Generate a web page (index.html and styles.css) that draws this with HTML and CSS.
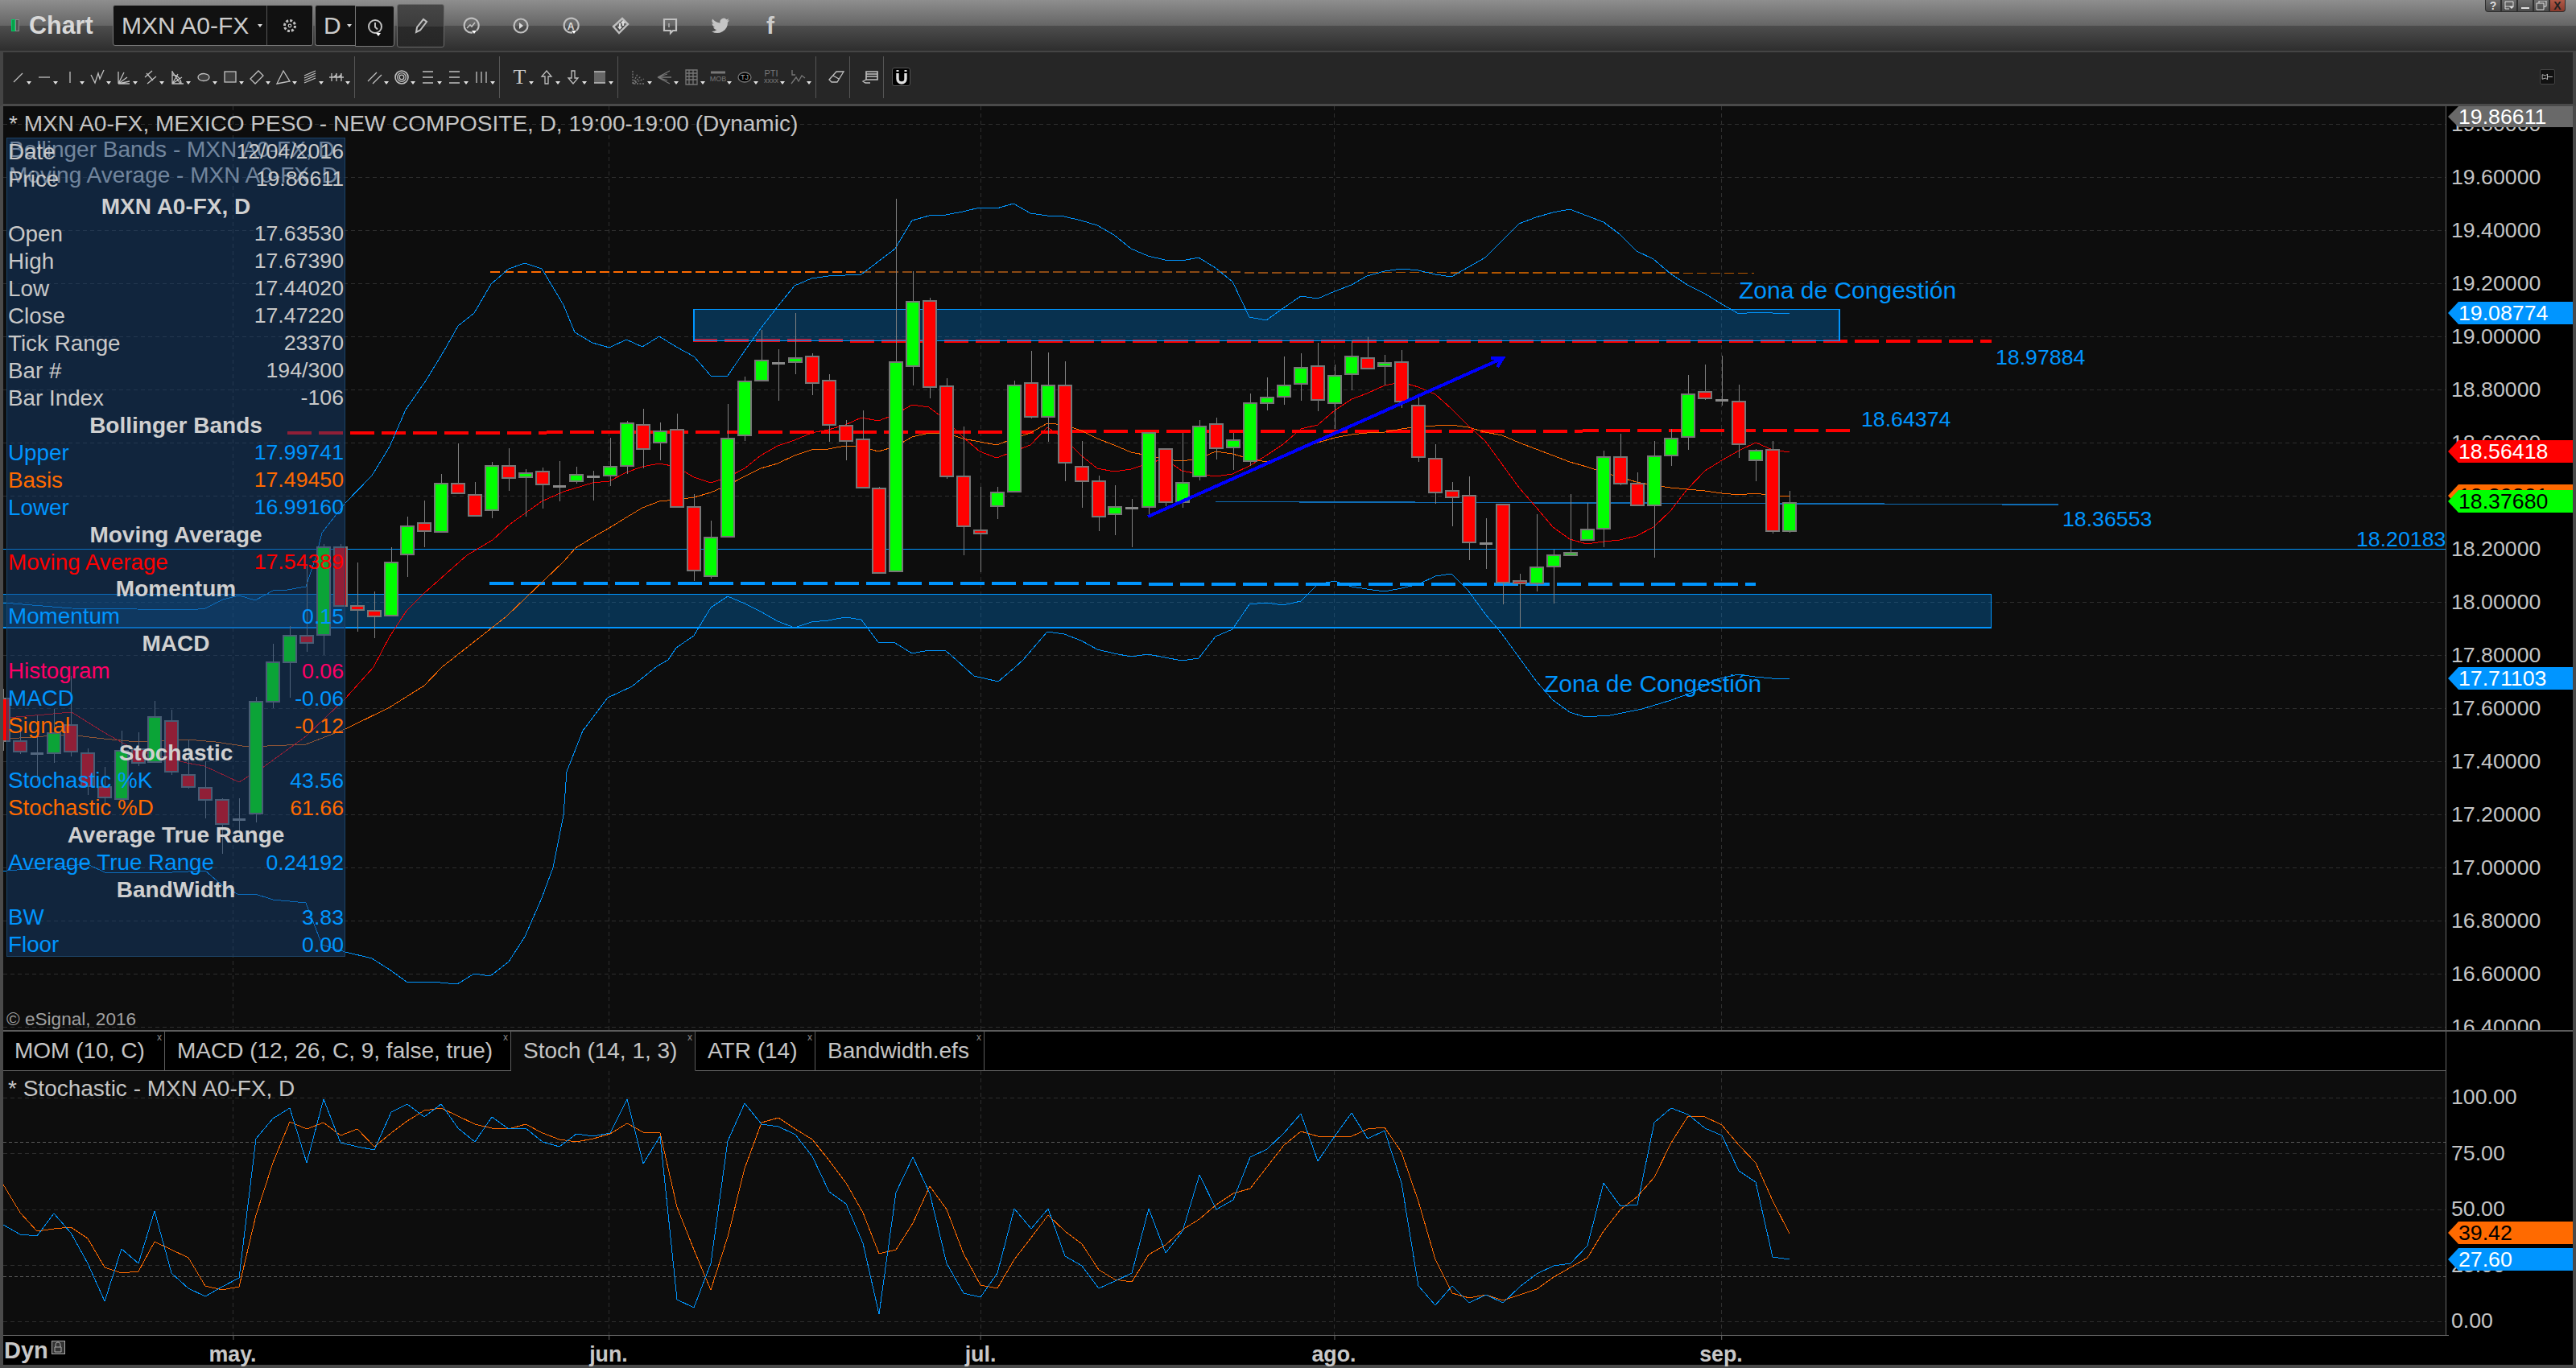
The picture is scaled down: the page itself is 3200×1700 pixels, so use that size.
FILE: index.html
```html
<!DOCTYPE html>
<html lang="es">
<head>
<meta charset="utf-8">
<title>Chart - MXN A0-FX</title>
<link rel="stylesheet" href="styles.css">
</head>
<body>
<div class="window">
  <header class="titlebar">
    <span class="led led-on"></span><span class="led"></span>
    <span class="app-name">Chart</span>
    <div class="symbol-box">
      <span class="symbol">MXN A0-FX</span><span class="mini-caret"></span>
      <span class="gear-cell"><svg class="ic" viewBox="0 0 24 24"><circle cx="12" cy="12" r="6.5" stroke-width="3" stroke-dasharray="3 2"/><circle cx="12" cy="12" r="1.8"/></svg></span>
    </div>
    <div class="interval-box"><span class="interval">D</span><span class="mini-caret"></span></div>
    <div class="clock-box"><svg class="ic" viewBox="0 0 24 24"><circle cx="12" cy="12" r="8" stroke-width="2"/><path d="M12 7v5.5l3 3" stroke-width="2"/></svg><span class="cap-caret"></span></div>
    <div class="pencil-box"><svg class="ic" viewBox="0 0 24 24"><path d="M6 20l1-6L15 4l4 3-8 10.5z" stroke-width="2"/></svg></div>
    <div class="title-icons">
      <span class="t-icon"><svg class="ic" viewBox="0 0 24 24"><path d="M19 18a9 9 0 1 0-5 2.5" stroke-width="2.2"/><path d="M7 15l4-4 2 2 4-5" stroke-width="1.6"/></svg><span class="cap-caret"></span></span>
      <span class="t-icon"><svg class="ic" viewBox="0 0 24 24"><circle cx="12" cy="12" r="8.5" stroke-width="2.2"/><path class="solid" d="M10 8l5 4-5 4z"/></svg></span>
      <span class="t-icon"><svg class="ic" viewBox="0 0 24 24"><path d="M19 18a9 9 0 1 0-5 2.5" stroke-width="2.2"/><text class="ic-a" x="12" y="16.5">A</text></svg><span class="cap-caret"></span></span>
      <span class="t-icon"><svg class="ic" viewBox="0 0 24 24"><path d="M3 13L14 3l7 7-11 11z" stroke-width="2.4"/><path class="solid" d="M8 13l3 4 3-4h-2V9h-2v4zM15 5l-3 4h2v3h2V9h2z"/></svg></span>
      <span class="t-icon"><svg class="ic" viewBox="0 0 24 24"><path d="M4 4h15v14h-4l-3 3v-3H4z" stroke-width="2.2"/><path d="M10 9v5"/></svg></span>
      <span class="t-icon"><svg class="ic ic-solid" viewBox="0 0 24 24"><path d="M23 4.9c-.8.4-1.7.6-2.6.7.9-.6 1.6-1.4 2-2.5-.9.5-1.9.9-2.9 1.1A4.6 4.6 0 0 0 11.6 8.4 13 13 0 0 1 2.2 3.6a4.6 4.6 0 0 0 1.4 6.1c-.7 0-1.4-.2-2.1-.6 0 2.2 1.6 4.1 3.7 4.6-.7.2-1.4.2-2.1.1.6 1.8 2.3 3.2 4.3 3.2A9.2 9.2 0 0 1 1 18.9 13 13 0 0 0 21 7.4c.9-.6 1.6-1.4 2-2.5z"/></svg></span>
      <span class="t-icon t-f">f</span>
    </div>
    <div class="win-buttons">
      <span class="win-btn">?</span>
      <span class="win-btn"><svg class="wb" viewBox="0 0 14 12"><path d="M2 1h10v6H2zM2 7v3h5" /><path class="solid" d="M7 7h6l-3 3z"/></svg></span>
      <span class="win-btn"><svg class="wb" viewBox="0 0 14 12"><path d="M2 9h10" stroke-width="2"/></svg></span>
      <span class="win-btn"><svg class="wb" viewBox="0 0 14 12"><path d="M4 3V0h9v7h-3M1 3h9v8H1z"/></svg></span>
      <span class="win-btn win-close">X</span>
    </div>
  </header>

  <nav class="toolbar">
    <span class="tool c"><svg class="ic" viewBox="0 0 24 24"><path d="M7 18L18 7"/></svg></span>
    <span class="tool c"><svg class="ic" viewBox="0 0 24 24"><path d="M5 12h14"/></svg></span>
    <span class="tool c"><svg class="ic" viewBox="0 0 24 24"><path d="M11 5v14"/></svg></span>
    <span class="tool c"><svg class="ic" viewBox="0 0 24 24"><path d="M4 9l5 10 4-12 2 7 5-11"/></svg></span>
    <span class="tool c"><svg class="ic" viewBox="0 0 24 24"><path d="M5 20V5M5 20l7-14M5 20l11-8M5 20l14-3M5 20h14"/></svg></span>
    <span class="tool c"><svg class="ic" viewBox="0 0 24 24"><path d="M5 12l9-8M8 20l11-9M7 7l8 9"/></svg></span>
    <span class="tool c"><svg class="ic" viewBox="0 0 24 24"><path d="M6 4v16h14M6 20l7-12M6 20l12-8M6 9a11 11 0 0 1 11 11M6 5l10 15"/></svg></span>
    <span class="tool c"><svg class="ic ic-g" viewBox="0 0 24 24"><ellipse cx="12" cy="12" rx="7" ry="4.5"/></svg></span>
    <span class="tool c"><svg class="ic ic-g" viewBox="0 0 24 24"><rect x="5" y="5" width="14" height="13"/></svg></span>
    <span class="tool c"><svg class="ic" viewBox="0 0 24 24"><path d="M4 14L14 4l6 6-10 10z"/></svg></span>
    <span class="tool c"><svg class="ic" viewBox="0 0 24 24"><path d="M4 20L12 4l8 13z"/></svg></span>
    <span class="tool c"><svg class="ic" viewBox="0 0 24 24"><path d="M5 10l14-6M5 13l14-6M5 16l14-6M5 19l14-6"/></svg></span>
    <span class="tool c"><svg class="ic" viewBox="0 0 24 24"><path d="M3 12h18M6 7v10M12 7v10M18 7v10M6 12c3 0 6-2 6-5M12 12c3 0 6-2 6-5"/></svg></span>
    <span class="sep"></span>
    <span class="tool c"><svg class="ic" viewBox="0 0 24 24"><path d="M3 17L14 6M9 20L20 9"/></svg></span>
    <span class="tool c"><svg class="ic" viewBox="0 0 24 24"><circle cx="12" cy="12" r="8" stroke-width="1.6"/><circle cx="12" cy="12" r="5.3"/><circle cx="12" cy="12" r="2.8"/></svg></span>
    <span class="tool c"><svg class="ic" viewBox="0 0 24 24"><path d="M5 5h13M5 12h13M5 19h13"/></svg></span>
    <span class="tool c"><svg class="ic" viewBox="0 0 24 24"><path d="M5 5h13M5 12h13M5 19h13"/></svg></span>
    <span class="tool c"><svg class="ic" viewBox="0 0 24 24"><path d="M6 5v14M12 5v14M18 5v14"/></svg></span>
    <span class="sep"></span>
    <span class="tool c tool-t">T</span>
    <span class="tool c"><svg class="ic" viewBox="0 0 24 24"><path d="M12 4l6 7h-4v9h-4v-9H6z"/></svg></span>
    <span class="tool c"><svg class="ic" viewBox="0 0 24 24"><path d="M12 20l-6-7h4V4h4v9h4z"/></svg></span>
    <span class="tool c"><svg class="ic ic-band" viewBox="0 0 24 24"><path d="M5 5h14v14H5z" stroke="none"/><path d="M5 5h14M5 19h14"/></svg></span>
    <span class="sep"></span>
    <span class="tool c"><svg class="ic ic-d" viewBox="0 0 24 24"><path d="M5 4v16h15M5 20l6-12M5 20l10-9M5 20l14-6" stroke-dasharray="2 1.5"/></svg></span>
    <span class="tool c"><svg class="ic ic-d" viewBox="0 0 24 24"><path d="M3 12l15-8M3 12h17M3 12l15 8M3 12l12-4M3 12l12 4"/></svg></span>
    <span class="tool c"><svg class="ic ic-d" viewBox="0 0 24 24"><path d="M5 3h14v18H5zM5 7h14M5 11h14M5 15h14M9 3v18M14 3v18"/></svg></span>
    <span class="tool c"><svg class="ic ic-d" viewBox="0 0 24 24"><path d="M3 6h18" stroke-width="3"/><text class="ic-small" x="12" y="17">MOB</text></svg></span>
    <span class="tool c"><svg class="ic ic-d" viewBox="0 0 24 24"><ellipse class="ic-black" cx="12" cy="12" rx="8" ry="6"/><text class="ic-small ic-light" x="12" y="15">TJ</text></svg></span>
    <span class="tool c"><svg class="ic ic-d" viewBox="0 0 24 24"><text class="ic-pti" x="12" y="11">PTI</text><text class="ic-small" x="12" y="19">xxxx</text></svg></span>
    <span class="tool c"><svg class="ic ic-d" viewBox="0 0 24 24"><path d="M5 3v6h4M4 20l6-8 3 5 4-7 4 3"/></svg></span>
    <span class="sep"></span>
    <span class="tool"><svg class="ic" viewBox="0 0 24 24"><path d="M3 15L12 5h9l-8 13H6zM8 10l7 4"/></svg></span>
    <span class="sep sep-tight"></span>
    <span class="tool"><svg class="ic" viewBox="0 0 24 24"><path d="M7 5h14v10H7zM7 8h14M7 11h14" stroke-width="1.6"/><path d="M7 15l-4 2 3 2h6"/></svg></span>
    <span class="sep sep-tight"></span>
    <span class="magnet"><svg class="ic ic-mag" viewBox="0 0 24 24"><path d="M7 3v2M17 3v2" stroke-width="3"/><path d="M7 7v7a5 5 0 0 0 10 0V7" stroke-width="3.4"/></svg></span>
    <span class="pin"><svg class="ic" viewBox="0 0 24 24"><path d="M3 8l6 2 3-3v10l-3-3-6 2zM12 12h9"/></svg></span>
  </nav>

  <div class="panes">
    <section class="pane-main">
      <div class="plot">
        <svg id="main-chart" class="chart" viewBox="4 132 3034 1148" width="3034" height="1148">
          <g id="main-grid"></g>
          <path class="dash-red" d="M861 423.4L2474 424.4"/>
          <path class="dash-red" d="M357 538L2299 535"/>
          <path class="dash-blue" d="M608 725L2181 726"/>
          <path class="dash-orange" d="M609 338L1070 338"/>
          <path class="dash-orange dash-orange-dim" d="M1070 338.2L1700 338.6"/>
          <path class="dash-orange dash-orange-mid" d="M1700 338.6L2179 339.4"/>
          <path class="rule-blue" d="M4 682H3038"/>
          <path class="rule-blue rule-blue-2" d="M1510 623.4L2557 627"/>
          <rect class="zone" x="862" y="384.5" width="1423" height="39"/>
          <rect class="zone" x="2" y="738.5" width="2471.5" height="41.5"/>
          <g id="studies"></g>
          <g id="candles"></g>
          <path class="arrow" d="M1426 642L1867 445M1852 445h15l-7 11"/>
          <text class="note" x="2160" y="371">Zona de Congestión</text>
          <text class="note" x="1918" y="860">Zona de Congestión</text>
          <text class="note note-num" x="2479" y="453">18.97884</text>
          <text class="note note-num" x="2312" y="530">18.64374</text>
          <text class="note note-num" x="2562" y="654">18.36553</text>
          <text class="note note-num" x="2927" y="679">18.20183</text>
        </svg>
        <div class="legend">
          <div class="legend-line">* MXN A0-FX, MEXICO PESO - NEW COMPOSITE, D, 19:00-19:00 (Dynamic)</div>
          <div class="legend-line">Bollinger Bands - MXN A0-FX, D</div>
          <div class="legend-line">Moving Average - MXN A0-FX, D</div>
        </div>
        <div class="copyright">© eSignal, 2016</div>
        <div class="data-panel">
          <div class="row"><span>Date</span><span>12/04/2016</span></div>
          <div class="row"><span>Price</span><span>19.86611</span></div>
          <div class="row head">MXN A0-FX, D</div>
          <div class="row"><span>Open</span><span>17.63530</span></div>
          <div class="row"><span>High</span><span>17.67390</span></div>
          <div class="row"><span>Low</span><span>17.44020</span></div>
          <div class="row"><span>Close</span><span>17.47220</span></div>
          <div class="row"><span>Tick Range</span><span>23370</span></div>
          <div class="row"><span>Bar #</span><span>194/300</span></div>
          <div class="row"><span>Bar Index</span><span>-106</span></div>
          <div class="row head">Bollinger Bands</div>
          <div class="row blue"><span>Upper</span><span>17.99741</span></div>
          <div class="row orange"><span>Basis</span><span>17.49450</span></div>
          <div class="row blue"><span>Lower</span><span>16.99160</span></div>
          <div class="row head">Moving Average</div>
          <div class="row red"><span>Moving Average</span><span>17.54389</span></div>
          <div class="row head">Momentum</div>
          <div class="row blue"><span>Momentum</span><span>0.15</span></div>
          <div class="row head">MACD</div>
          <div class="row pink"><span>Histogram</span><span>0.06</span></div>
          <div class="row blue"><span>MACD</span><span>-0.06</span></div>
          <div class="row orange"><span>Signal</span><span>-0.12</span></div>
          <div class="row head">Stochastic</div>
          <div class="row blue"><span>Stochastic %K</span><span>43.56</span></div>
          <div class="row orange"><span>Stochastic %D</span><span>61.66</span></div>
          <div class="row head">Average True Range</div>
          <div class="row blue"><span>Average True Range</span><span>0.24192</span></div>
          <div class="row head">BandWidth</div>
          <div class="row blue"><span>BW</span><span>3.83</span></div>
          <div class="row blue"><span>Floor</span><span>0.00</span></div>
        </div>
      </div>
      <div class="axis axis-main">
        <div class="scale scale-main">
          <span>19.80000</span><span>19.60000</span><span>19.40000</span><span>19.20000</span><span>19.00000</span><span>18.80000</span><span>18.60000</span><span>18.40000</span><span>18.20000</span><span>18.00000</span><span>17.80000</span><span>17.60000</span><span>17.40000</span><span>17.20000</span><span>17.00000</span><span>16.80000</span><span>16.60000</span><span>16.40000</span>
        </div>
        <span class="tag tag-price">19.86611</span>
        <span class="tag tag-upper">19.08774</span>
        <span class="tag tag-ma">18.56418</span>
        <span class="tag tag-basis">18.39801</span>
        <span class="tag tag-last">18.37680</span>
        <span class="tag tag-lower">17.71103</span>
      </div>
    </section>

    <section class="pane-lower">
      <div class="lower-left">
        <div class="tabs">
          <span class="tab tab-mom">MOM (10, C)<i class="tab-x">x</i></span>
          <span class="tab tab-macd">MACD (12, 26, C, 9, false, true)<i class="tab-x">x</i></span>
          <span class="tab tab-stoch">Stoch (14, 1, 3)<i class="tab-x">x</i></span>
          <span class="tab tab-atr">ATR (14)<i class="tab-x">x</i></span>
          <span class="tab tab-band">Bandwidth.efs<i class="tab-x">x</i></span>
        </div>
        <div class="plot plot-stoch">
          <svg id="stoch-chart" class="chart" viewBox="4 1331 3034 328" width="3034" height="328">
            <g id="stoch-grid"></g>
            <g id="stoch-lines"></g>
          </svg>
          <div class="stoch-legend">* Stochastic - MXN A0-FX, D</div>
        </div>
      </div>
      <div class="axis axis-stoch">
        <div class="scale scale-stoch">
          <span>100.00</span><span>75.00</span><span>50.00</span><span>25.00</span><span>0.00</span>
        </div>
        <span class="tag tag-d">39.42</span>
        <span class="tag tag-k">27.60</span>
      </div>
    </section>

    <footer class="time-axis">
      <span class="dyn">Dyn</span>
      <span class="lock"><svg viewBox="0 0 17 17"><rect x="0.5" y="0.5" width="16" height="16"/><path d="M5 8V5a3 3 0 0 1 6 0v3M4 8h8v6H4z"/></svg></span>
      <span class="month m-may">may.</span>
      <span class="month m-jun">jun.</span>
      <span class="month m-jul">jul.</span>
      <span class="month m-ago">ago.</span>
      <span class="month m-sep">sep.</span>
    </footer>
  </div>
</div>
<script src="chart.js"></script>
</body>
</html>
```

FILE: styles.css
```css
* { box-sizing: border-box; }
html, body { margin: 0; padding: 0; background: #000; }
body { font-family: "Liberation Sans", Arial, sans-serif; font-size: 26.7px; color: #c4c4c4; }

.window { width: 3200px; height: 1700px; display: flex; flex-direction: column; overflow: hidden; background: #000; }

/* title bar */
.titlebar { height: 63px; flex: none; display: flex; align-items: center; padding-left: 14px;
  background: linear-gradient(#8e8e8e 0, #656565 32px, #4d4d4d 32px, #2f2f2f 62px); position: relative; }
.led { width: 5px; height: 15px; background: #555; border: 1px solid #888; margin-right: 0; }
.led-on { background: #0aa04a; border-color: #0c6; }
.app-name { font-weight: bold; font-size: 30.5px; color: #d8d8d8; margin-left: 12px; width: 104px; }
.symbol-box { width: 249px; height: 51px; display: flex; align-items: center; background: #111; border: 1px solid #777; border-radius: 3px; padding-left: 10px; }
.symbol { font-size: 30px; width: 169px; color: #ccc; }
.mini-caret { width: 0; height: 0; border: 3px solid transparent; border-top: 4px solid #ddd; border-bottom: 0; }
.gear-cell { flex: 1; height: 100%; margin-left: 5px; border-left: 1px solid #555; display: flex; align-items: center; justify-content: center; }
.interval-box { width: 50px; height: 51px; margin-left: 2px; display: flex; align-items: center; gap: 7px; padding-left: 10px; background: #111; border: 1px solid #777; border-right: 0; border-radius: 3px 0 0 3px; }
.interval { font-size: 30px; color: #ccc; }
.clock-box { width: 49px; height: 51px; margin-top: 2px; position: relative; display: flex; align-items: center; justify-content: center; background: #111; border: 1px solid #777; border-radius: 0 3px 3px 0; }
.pencil-box { width: 59px; height: 54px; margin-left: 3px; display: flex; align-items: center; justify-content: center; background: linear-gradient(#464646 0, #3c3c3c 27px, #2a2a2a 27px, #262626 100%); border: 1px solid #6a6a6a; border-radius: 3px; }
.title-icons { display: flex; margin-left: 2px; }
.t-icon { width: 62px; height: 30px; position: relative; display: flex; align-items: center; justify-content: center; }
.t-f { font-weight: bold; font-size: 30px; color: #ccc; }
.cap-caret { position: absolute; left: 50%; top: 72%; margin-left: 1px; width: 0; height: 0; border: 3px solid transparent; border-top: 4px solid #fff; border-bottom: 0; }
.clock-box .cap-caret { top: 68%; }

.win-buttons { margin-left: auto; margin-right: 13px; align-self: flex-start; display: flex; }
.win-btn { width: 20px; height: 15px; display: flex; align-items: center; justify-content: center; background: linear-gradient(#6c6c6c, #4a4a4a); border: 1px solid #2e2e2e; border-top: 0; color: #ddd; font-size: 14px; font-weight: bold; }
.win-btn:first-child { border-radius: 0 0 0 4px; }
.win-close { background: linear-gradient(#b05a48, #8a3a2c); color: #222; border-radius: 0 0 4px 0; }
.wb { width: 14px; height: 12px; fill: none; stroke: #ddd; stroke-width: 1; }
.wb .solid { fill: #ddd; stroke: none; }

/* icons */
.ic { width: 24px; height: 24px; flex: none; fill: none; stroke: #c0c0c0; stroke-width: 1.3; }
.ic .solid { fill: #ddd; stroke: none; }
.ic-solid { fill: #c4c4c4; stroke: none; }
.ic-g { fill: #3e3e3e; }
.ic-band path:first-child { fill: #666; }
.ic-d { stroke: #777; }
.ic-a { font-size: 12px; text-anchor: middle; fill: #ddd; stroke: none; font-weight: bold; }
.ic-small { font-size: 9px; text-anchor: middle; fill: #777; stroke: none; }
.ic-light { fill: #aaa; }
.ic-pti { font-size: 11px; text-anchor: middle; fill: #777; stroke: none; }
.ic-black { fill: #000; }
.ic-mag { stroke: #ddd; }

/* drawing toolbar */
.toolbar { height: 69px; flex: none; display: flex; align-items: center; padding: 0 0 3px 1px; background: #262626; border-top: 2px solid #444; border-left: 4px solid #444; border-right: 4px solid #444; border-bottom: 3px solid #4a4a4a; }
.tool { width: 33px; height: 24px; position: relative; display: flex; align-items: center; justify-content: center; }
.tool.c::after { content: ""; position: absolute; left: 28px; top: 17px; width: 0; height: 0; border: 3.5px solid transparent; border-top: 4px solid #e0e0e0; border-bottom: 0; }
.tool-t { font-family: "Liberation Serif", serif; font-size: 26px; color: #ccc; }
.sep { width: 1px; height: 52px; background: #555; margin: 0 8px 0 6px; }
.sep-tight { margin-left: 0; }
.magnet { width: 23px; height: 23px; margin-left: 2px; display: flex; align-items: center; justify-content: center; background: #000; border: 1px solid #555; border-radius: 3px; }
.pin { width: 19px; height: 19px; margin-left: auto; margin-right: 22px; display: flex; align-items: center; justify-content: center; background: #111; border: 1px solid #444; border-radius: 2px; }
.pin .ic { width: 17px; height: 17px; }

/* panes */
.panes { flex: 1; display: flex; flex-direction: column; min-height: 0; border-left: 4px solid #4a4a4a; border-right: 4px solid #4a4a4a; border-bottom: 4px solid #4a4a4a; }
.pane-main { height: 1150px; flex: none; display: flex; border-bottom: 2px solid #5c5c5c; }
.plot { position: relative; width: 3034px; height: 100%; background: #0d0d0d; overflow: hidden; }
.chart { display: block; shape-rendering: crispEdges; }

.axis { flex: 1; position: relative; background: #000; border-left: 1px solid #666; overflow: hidden; }
.scale { display: flex; flex-direction: column; color: #c4c4c4; padding-left: 6px; }
.scale-main { margin-top: -11px; }
.scale-main span { height: 66px; line-height: 66px; flex: none; }
.scale-stoch { margin-top: 47.25px; }
.scale-stoch span { height: 69.5px; line-height: 69.5px; flex: none; }

.tag { position: absolute; left: 2px; right: 0; height: 28px; line-height: 28px; padding-left: 13px; clip-path: polygon(0 50%, 13px 0, 100% 0, 100% 100%, 13px 100%); color: #fff; }
.tag-price { top: 0; height: 26px; line-height: 26px; background: #696969; }
.tag-upper { top: 243px; background: #0095ff; }
.tag-ma { top: 415px; background: #ff0000; }
.tag-basis { top: 470px; background: #ff6a00; color: #000; }
.tag-last { top: 477px; background: #00ff00; color: #000; }
.tag-lower { top: 697px; background: #0095ff; }
.tag-d { top: 236px; background: #ff6a00; color: #000; }
.tag-k { top: 269px; background: #0095ff; }

/* chart overlays */
.dash-red, .dash-blue, .dash-orange, .rule-blue, .arrow { fill: none; }
.dash-red { stroke: #ff0000; stroke-width: 4; stroke-dasharray: 30 9; }
.dash-blue { stroke: #0095ff; stroke-width: 4; stroke-dasharray: 30 9; }
.dash-orange { stroke: #ff6a00; stroke-width: 1.5; stroke-dasharray: 12 5; }
.dash-orange-dim { stroke: #8c4a14; stroke-width: 2; }
.dash-orange-mid { stroke: #b05500; }
.rule-blue { stroke: #0095ff; stroke-width: 1; }
.rule-blue-2 { stroke: #0f6cb4; stroke-width: 1.5; }
.zone { fill: rgba(0, 125, 215, 0.33); stroke: #0095ff; stroke-width: 1.5; }
.arrow { stroke: #0000ff; stroke-width: 4; }
.note { font-size: 30px; fill: #0095ff; }
.note-num { font-size: 26.7px; }

.grid-h, .grid-v { fill: none; stroke: #2e2e2e; stroke-width: 1; stroke-dasharray: 5 4; }
.grid-strong { stroke: #5a5a5a; stroke-dasharray: 4 3; }
.line-blue, .line-red, .line-orange { fill: none; stroke-width: 1; }
.line-blue { stroke: #0095ff; }
.line-red { stroke: #ff0000; }
.line-orange { stroke: #ff6a00; }
.wick { stroke: #808080; stroke-width: 1; }
.body-g { fill: #00ff00; stroke: #777; stroke-width: 1.5; }
.body-r { fill: #ff0000; stroke: #777; stroke-width: 1.5; }
.body-d { fill: #8a8a8a; }

.legend { position: absolute; left: 7px; top: 6px; font-size: 28px; }
.legend-line { height: 32px; line-height: 32px; white-space: nowrap; color: #c4c4c4; }
.copyright { position: absolute; left: 4px; bottom: 0; font-size: 22.6px; line-height: 26px; color: #a0a0a0; }

.data-panel { position: absolute; left: 4px; top: 39px; width: 421px; height: 1018px; overflow: hidden; display: flex; flex-direction: column; background: rgba(24, 64, 116, 0.48); border: 1px solid #1d4468; }
.row { flex: none; height: 33.97px; display: flex; align-items: center; justify-content: space-between; padding: 0 1px; white-space: nowrap; color: #c8c8c8; font-size: 27.8px; }
.row span:last-child { font-size: 26.7px; }
.row.head { justify-content: center; font-weight: bold; font-size: 28px; color: #d0d0d0; }
.blue { color: #0095ff; }
.orange { color: #ff6a00; }
.red { color: #ff0000; }
.pink { color: #ff0066; }

/* lower pane */
.pane-lower { height: 377px; flex: none; display: flex; }
.lower-left { width: 3034px; display: flex; flex-direction: column; }
.tabs { height: 49px; flex: none; display: flex; background: #000; border-bottom: 1px solid #666; }
.tab { position: relative; height: 49px; line-height: 47px; font-size: 28px; white-space: nowrap; color: #c4c4c4; border-right: 1px solid #5c5c5c; border-bottom: 1px solid #666; flex: none; }
.tab-mom { width: 201px; padding-left: 14px; }
.tab-macd { width: 430px; padding-left: 15px; }
.tab-stoch { width: 229px; padding-left: 15px; background: #0d0d0d; border-bottom-color: #0d0d0d; }
.tab-atr { width: 149px; padding-left: 15px; }
.tab-band { width: 210px; padding-left: 15px; }
.tab-x { position: absolute; right: 3px; top: 0; font-style: normal; font-size: 12px; line-height: 14px; color: #888; }
.plot-stoch { width: auto; flex: 1; height: auto; }
.stoch-legend { position: absolute; left: 6px; top: 6px; line-height: 32px; font-size: 28px; color: #c4c4c4; }
.axis-stoch { flex: 1; }

/* time axis */
.time-axis { flex: 1; position: relative; background: #000; border-top: 1px solid #666; display: flex; align-items: center; margin-right: 154px; overflow: visible; }
.dyn { font-weight: bold; font-size: 29px; color: #c8c8c8; margin-left: 1px; }
.lock { width: 17px; height: 17px; margin-left: 4px; margin-top: -8px; }
.lock svg { display: block; width: 17px; height: 17px; fill: #333; stroke: #aaa; stroke-width: 1; }
.month { position: absolute; top: 8px; transform: translateX(-50%); font-weight: bold; font-size: 26.8px; color: #c8c8c8; }
.month::before { content: ""; position: absolute; left: 50%; top: -8px; width: 1px; height: 5px; background: #666; }
.m-may { left: 285px; }
.m-jun { left: 752px; }
.m-jul { left: 1214px; }
.m-ago { left: 1653px; }
.m-sep { left: 2134px; }
```

FILE: chart.js
```js
(function () {
  var NS = 'http://www.w3.org/2000/svg';
  function el(parent, name, cls, attrs) {
    var n = document.createElementNS(NS, name);
    if (cls) n.setAttribute('class', cls);
    for (var a in attrs) n.setAttribute(a, attrs[a]);
    parent.appendChild(n);
    return n;
  }
  function X(k) { return Math.round(2222.7 - 20.93 * k); }
  function pairs(a) { var s = []; for (var i = 0; i < a.length; i += 2) s.push(a[i] + ',' + a[i + 1]); return s.join(' '); }

  var VX = [289, 756, 1218, 1657, 2138];

  /* main grid */
  var mg = document.getElementById('main-grid');
  for (var i = 0; i < 18; i++) el(mg, 'path', 'grid-h', { d: 'M4 ' + (154 + 66 * i) + 'H3038' });
  VX.forEach(function (x) { el(mg, 'path', 'grid-v', { d: 'M' + x + ' 132V1280' }); });

  /* studies */
  var upper = [4,749,89,756,170,757,237,758,255,756,277,745,297,740,317,746,339,734,357,733,380,729,393,690,400,662,429,625,462,591,484,555,504,509,529,473,551,437,569,405,589,389,610,353,632,334,652,327,673,334,687,357,700,379,714,413,736,426,757,432,778,422,798,431,819,418,840,431,862,443,883,467,904,467,925,436,945,408,966,381,987,355,1008,346,1029,343,1050,342,1070,341,1091,325,1112,309,1133,274,1154,268,1175,267,1196,263,1217,258,1238,259,1259,253,1280,265,1301,268,1322,269,1343,274,1363,280,1384,292,1405,309,1426,318,1447,323,1468,324,1489,320,1510,333,1531,350,1552,394,1573,398,1594,383,1616,368,1637,371,1658,362,1679,354,1698,343,1720,337,1741,334,1762,336,1783,341,1803,344,1824,332,1845,320,1866,299,1887,278,1908,270,1929,264,1950,260,1971,268,1992,276,2012,291,2033,312,2054,322,2075,340,2096,354,2118,365,2139,378,2160,390,2181,388,2202,389,2223,390];
  var lower = [4,1082,9,1082,109,1074,130,1084,214,1084,255,1082,277,1101,297,1112,317,1111,339,1118,380,1122,400,1174,429,1183,462,1191,484,1205,505,1220,536,1220,568,1223,589,1210,609,1213,632,1195,652,1164,673,1116,687,1078,700,1013,704,959,724,908,755,867,785,853,816,828,830,820,840,805,862,790,883,755,904,741,925,750,945,760,966,772,987,780,1008,773,1029,771,1050,767,1070,770,1091,798,1112,799,1133,812,1154,808,1175,809,1188,820,1210,840,1240,847,1260,830,1271,820,1301,785,1322,788,1343,796,1363,807,1384,812,1405,816,1426,813,1447,817,1468,821,1489,818,1510,791,1531,782,1552,751,1573,749,1594,752,1616,747,1637,726,1658,722,1679,729,1698,732,1720,735,1741,731,1762,726,1783,716,1803,713,1824,734,1845,763,1866,788,1887,817,1908,846,1929,870,1950,885,1969,891,2000,889,2040,881,2076,870,2101,861,2133,844,2159,838,2180,841,2201,843,2223,843];
  var ma = [4,893,9,892,89,885,129,910,170,933,232,948,254,952,297,972,326,954,380,915,429,868,464,829,484,791,505,759,527,737,580,690,612,671,634,651,673,623,700,611,736,600,757,598,778,587,798,580,819,576,840,580,862,593,883,600,904,593,925,582,945,566,966,554,987,547,1008,538,1029,534,1050,528,1070,519,1091,523,1112,515,1133,503,1154,506,1175,522,1196,543,1217,561,1238,569,1259,561,1280,553,1301,531,1322,545,1343,566,1363,582,1384,586,1405,583,1426,576,1447,570,1468,585,1489,589,1510,592,1531,589,1552,579,1573,566,1594,552,1616,533,1637,528,1658,510,1679,496,1698,489,1720,479,1741,475,1762,481,1783,490,1803,508,1824,529,1845,548,1866,577,1887,606,1908,630,1929,655,1950,670,1971,676,1992,673,2012,671,2033,666,2054,655,2075,635,2096,608,2118,585,2139,572,2160,560,2181,550,2202,559,2223,562];
  var basis = [4,919,9,918,85,913,129,918,170,922,232,919,268,922,308,928,380,925,429,906,484,879,527,852,549,829,629,766,700,698,715,681,736,668,757,656,778,643,798,631,819,623,840,621,862,618,883,612,904,603,925,592,945,582,966,576,987,566,1008,559,1029,558,1050,554,1070,555,1091,561,1112,555,1133,543,1154,538,1175,538,1196,545,1217,549,1238,553,1259,545,1280,538,1301,526,1322,528,1343,535,1363,545,1384,553,1405,562,1426,566,1447,571,1468,573,1489,570,1510,561,1531,564,1552,570,1573,574,1594,568,1616,556,1637,550,1658,544,1679,540,1698,538,1720,537,1741,533,1762,530,1783,529,1803,528,1824,531,1845,537,1866,541,1887,550,1908,558,1929,566,1950,574,1971,580,1992,587,2012,593,2033,599,2054,603,2075,606,2096,608,2118,610,2139,613,2160,615,2181,613,2202,616,2223,617];
  var st = document.getElementById('studies');
  el(st, 'polyline', 'line-blue', { points: pairs(upper) });
  el(st, 'polyline', 'line-blue', { points: pairs(lower) });
  el(st, 'polyline', 'line-orange', { points: pairs(basis) });
  el(st, 'polyline', 'line-red', { points: pairs(ma) });

  /* candles, oldest first: type, wick top, body top, body bottom, wick bottom */
  var bars = [
    'r',856,868,921,933,'r',905,921,934,937,'d',889,936,936,971,'g',881,911,936,948,'r',840,901,934,940,
    'r',930,936,977,988,'r',953,978,991,1000,'g',908,933,993,993,'r',910,931,948,952,'g',871,891,947,947,
    'r',882,896,959,963,'r',919,963,978,980,'r',946,979,994,1017,'r',992,994,1024,1061,'d',992,1018,1018,1034,
    'g',866,872,1011,1022,'g',800,823,872,880,'g',778,790,823,867,'r',703,790,799,810,'g',676,680,789,814,
    'r',676,680,753,753,'r',699,753,758,785,'r',735,759,766,793,'g',680,699,765,765,'g',642,654,689,717,
    'r',622,650,660,680,'g',589,601,661,661,'r',551,601,613,613,'r',599,615,641,641,'g',574,579,634,644,
    'r',557,579,594,610,'g',583,588,593,642,'r',581,586,602,632,'d',573,604,604,623,'g',580,590,598,601,
    'd',585,592,592,622,'g',544,580,591,604,'g',523,526,579,589,'r',508,528,558,582,'g',525,536,550,572,
    'r',514,534,630,630,'r',614,630,709,722,'g',647,668,716,719,'g',502,545,667,668,'g',468,474,541,548,
    'g',410,448,473,474,'d',434,451,451,498,'g',389,445,450,465,'r',439,443,476,491,'r',465,473,528,549,
    'r',522,529,548,572,'r',510,546,606,606,'r',605,607,712,712,'g',247,450,710,711,'g',337,375,455,479,
    'r',370,374,481,495,'r',470,480,592,595,'r',530,592,654,690,'r',605,659,663,711,'g',605,612,629,645,
    'g',473,479,611,612,'r',436,476,518,520,'g',438,479,518,549,'r',449,479,575,598,'r',548,580,598,631,
    'r',591,598,642,660,'g',603,630,639,665,'d',620,631,631,680,'g',538,538,630,642,'r',558,558,624,629,
    'g',538,600,624,631,'g',522,530,592,597,'r',519,527,557,571,'g',538,547,556,584,'g',489,501,573,579,
    'g',469,494,501,510,'g',443,479,493,503,'g',439,457,477,498,'r',426,455,497,511,'g',453,467,501,533,
    'g',423,443,465,485,'r',419,445,458,458,'g',441,451,455,479,'r',435,450,499,507,'r',492,504,568,574,
    'r',552,570,612,626,'r',599,610,618,654,'r',592,616,674,696,'d',644,675,675,707,'r',627,627,724,751,
    'r',713,722,725,780,'g',639,705,725,735,'g',683,690,704,750,'g',614,687,690,691,'g',625,658,671,671,
    'g',560,568,657,680,'r',539,568,601,603,'r',587,601,628,628,'g',548,567,628,693,'g',533,545,566,579,
    'g',466,490,543,559,'r',453,487,495,497,'d',442,497,497,504,'r',478,499,552,569,'g',558,560,572,598,
    'r',548,559,660,663,'g',610,625,660,662
  ];
  var cg = document.getElementById('candles');
  for (var b = 0; b < bars.length; b += 5) {
    var k = 106 - b / 5, x = X(k), t = bars[b];
    el(cg, 'path', 'wick', { d: 'M' + x + ' ' + bars[b + 1] + 'V' + bars[b + 4] });
    if (t === 'd') el(cg, 'rect', 'body-d', { x: x - 8, y: bars[b + 2] - 1, width: 16, height: 3 });
    else el(cg, 'rect', t === 'g' ? 'body-g' : 'body-r', { x: x - 8, y: bars[b + 2], width: 16, height: bars[b + 3] - bars[b + 2] });
  }

  /* stochastic: raw values run oldest to newest, in 1/3 pixels below y=1260 */
  var K = [787,822,827,745,815,930,1072,877,930,735,965,1023,1052,1018,985,465,390,350,555,318,480,495,508,365,337,383,335,425,477,385,430,427,478,495,448,455,443,318,557,455,1065,1095,930,475,332,412,420,450,
    530,663,708,855,1120,665,535,670,930,1040,1057,965,727,800,727,903,940,1022,997,965,725,890,810,600,728,692,535,503,445,373,550,455,370,465,435,630,1015,1087,1015,1078,1047,1078,1018,970,940,930,865,630,717,710,405,352,375,425,452,585,628,905,916];
  var D = [635,742,810,800,795,838,945,965,960,850,880,910,1015,1030,1018,750,555,403,430,406,452,430,495,445,400,360,352,382,410,427,430,412,445,468,476,465,447,407,440,445,720,880,1030,830,575,405,388,430,
    468,545,630,740,895,880,780,643,730,895,1012,1022,915,835,750,810,858,955,990,998,897,860,805,765,710,668,652,570,490,438,455,458,455,428,424,515,700,915,1040,1060,1048,1068,1047,1025,980,945,910,810,730,680,610,480,380,383,415,490,555,697,818];
  function series(a) {
    var n = a.length, p = [];
    for (var j = 0; j < n; j++) p.push(X(n - 1 - j), Math.round(1260 + a[j] / 3));
    return pairs(p);
  }
  var sg = document.getElementById('stoch-grid');
  [1364, 1433, 1503, 1572, 1642].forEach(function (y) { el(sg, 'path', 'grid-h', { d: 'M4 ' + y + 'H3038' }); });
  [1419, 1586].forEach(function (y) { el(sg, 'path', 'grid-h grid-strong', { d: 'M4 ' + y + 'H3038' }); });
  VX.forEach(function (x) { el(sg, 'path', 'grid-v', { d: 'M' + x + ' 1331V1659' }); });
  var sl = document.getElementById('stoch-lines');
  el(sl, 'polyline', 'line-orange', { points: series(D) });
  el(sl, 'polyline', 'line-blue', { points: series(K) });
})();
```
